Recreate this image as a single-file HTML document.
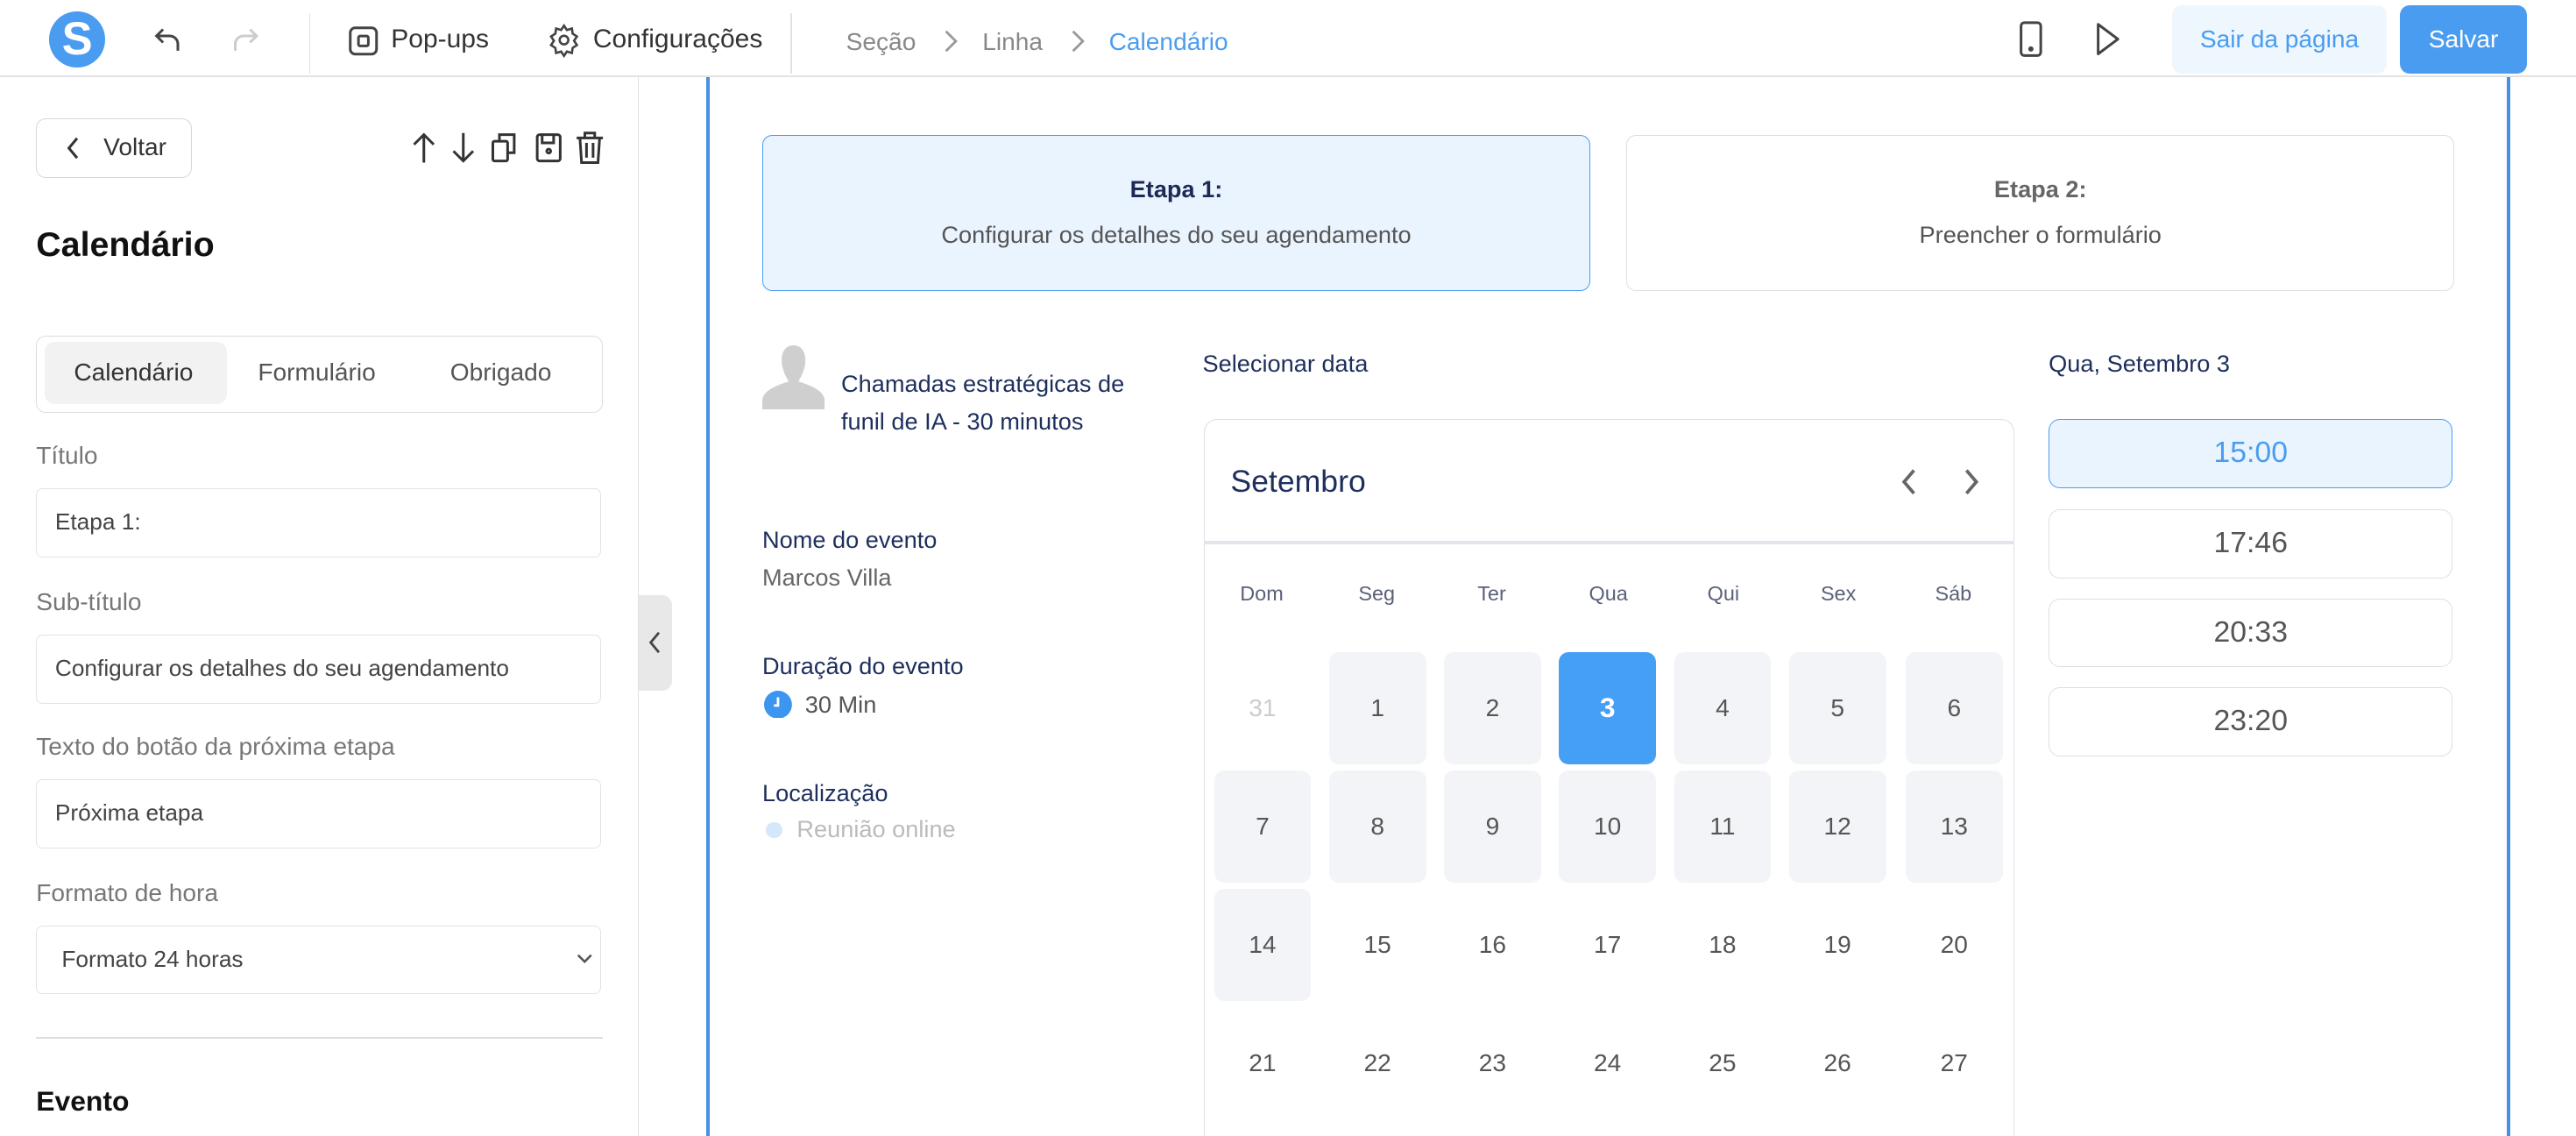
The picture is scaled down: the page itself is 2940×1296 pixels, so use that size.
<!DOCTYPE html>
<html><head><meta charset="utf-8"><style>
*{box-sizing:border-box;margin:0;padding:0}
html,body{width:2940px;height:1296px;overflow:hidden;background:#fff}
#w{zoom:1.875;width:1568px;height:691.2px;position:relative;font-family:"Liberation Sans",sans-serif;color:#333;overflow:hidden}
.a{position:absolute}
.t{position:absolute;white-space:nowrap}
.inp{position:absolute;left:22px;width:344px;height:42px;border:1px solid #e3e3e3;border-radius:4px;font-size:14px;color:#444;padding:0 11px;line-height:40px}
.lab{position:absolute;left:22px;font-size:15px;color:#777}
.cell{position:absolute;width:59px;height:68px;border-radius:6px;font-size:15px;color:#555;text-align:center;line-height:68px}
.g{background:#f3f4f7}
.slot{position:absolute;left:1247px;width:246px;height:42px;border:1px solid #dcdee3;border-radius:7px;text-align:center;line-height:40px;font-size:18px;color:#555}
.dn{position:absolute;top:354px;font-size:12.5px;color:#5a6178;width:60px;text-align:center}
</style></head><body><div id="w">
<!-- top bar -->
<div class="a" style="left:0;top:46px;width:1568px;height:1px;background:#e2e2e2"></div>
<div class="a" style="left:30px;top:7px;width:34px;height:34px;border-radius:50%;background:#4a9cf0;color:#fff;font-weight:bold;font-size:28px;text-align:center;line-height:34px">S</div>
<svg class="a" style="left:92px;top:14px" width="20" height="20" viewBox="0 0 20 20" fill="none" stroke="#444" stroke-width="1.6"><path d="M7 4L3 8l4 4M3 8h8a5 5 0 0 1 5 5v4"/></svg>
<svg class="a" style="left:139px;top:14px" width="20" height="20" viewBox="0 0 20 20" fill="none" stroke="#ccc" stroke-width="1.6"><path d="M13 4l4 4-4 4M17 8H9a5 5 0 0 0-5 5v4"/></svg>
<div class="a" style="left:188px;top:8px;width:1px;height:37px;background:#e2e2e2"></div>
<svg class="a" style="left:211px;top:15px" width="20" height="20" viewBox="0 0 20 20" fill="none" stroke="#444" stroke-width="1.6"><rect x="2" y="2" width="16" height="16" rx="3"/><rect x="7" y="7" width="6" height="6" rx="1"/></svg>
<div class="t" style="left:238px;top:15px;font-size:16px;color:#333">Pop-ups</div>
<svg class="a" style="left:333px;top:14px" width="21" height="21" viewBox="0 0 24 24" fill="none" stroke="#444" stroke-width="1.6"><circle cx="12" cy="12" r="3"/><path d="M12 2l2 3 3.5-1 .5 3.5 3 2-2 3 2 3-3 2-.5 3.5-3.5-1-2 3-2-3-3.5 1-.5-3.5-3-2 2-3-2-3 3-2 .5-3.5 3.5 1z"/></svg>
<div class="t" style="left:361px;top:15px;font-size:16px;color:#333">Configurações</div>
<div class="a" style="left:481px;top:8px;width:1px;height:37px;background:#e2e2e2"></div>
<div class="t" style="left:515px;top:17px;font-size:15px;color:#888">Seção</div>
<svg class="a" style="left:573px;top:17px" width="12" height="16" viewBox="0 0 12 16" fill="none" stroke="#999" stroke-width="1.5"><path d="M3 2l6 6-6 6"/></svg>
<div class="t" style="left:598px;top:17px;font-size:15px;color:#888">Linha</div>
<svg class="a" style="left:650px;top:17px" width="12" height="16" viewBox="0 0 12 16" fill="none" stroke="#999" stroke-width="1.5"><path d="M3 2l6 6-6 6"/></svg>
<div class="t" style="left:675px;top:17px;font-size:15px;color:#4a9cf0">Calendário</div>
<svg class="a" style="left:1227px;top:13px" width="18" height="22" viewBox="0 0 18 22" fill="none" stroke="#444" stroke-width="1.6"><rect x="3" y="1" width="12" height="20" rx="2"/><circle cx="9" cy="17" r=".8" fill="#444"/></svg>
<svg class="a" style="left:1274px;top:13px" width="18" height="22" viewBox="0 0 18 22" fill="none" stroke="#444" stroke-width="1.6"><path d="M3 2l12 9-12 9z" stroke-linejoin="round"/></svg>
<div class="a" style="left:1322px;top:3px;width:131px;height:42px;background:#eef6fe;border-radius:6px;color:#4a9cf0;font-size:15px;text-align:center;line-height:42px">Sair da página</div>
<div class="a" style="left:1461px;top:3px;width:77px;height:42px;background:#4a9cf0;border-radius:6px;color:#fff;font-size:15px;text-align:center;line-height:42px">Salvar</div>
<!-- left panel -->
<div class="a" style="left:388px;top:47px;width:1px;height:650px;background:#e2e2e2"></div>
<div class="a" style="left:389px;top:362px;width:20px;height:58px;background:#e8e8e8;border-radius:0 6px 6px 0"></div>
<svg class="a" style="left:393px;top:383px" width="12" height="16" viewBox="0 0 12 16" fill="none" stroke="#444" stroke-width="1.5"><path d="M8 2L3 8l5 6"/></svg>
<div class="a" style="left:22px;top:72px;width:95px;height:36px;border:1px solid #d8d8d8;border-radius:6px"></div>
<svg class="a" style="left:39px;top:82px" width="12" height="16" viewBox="0 0 12 16" fill="none" stroke="#333" stroke-width="1.6"><path d="M8 2L3 8l5 6"/></svg>
<div class="t" style="left:63px;top:81px;font-size:15px;color:#333">Voltar</div>
<svg class="a" style="left:248px;top:79px" width="124" height="22" viewBox="0 0 124 22" fill="none" stroke="#333" stroke-width="1.6"><path d="M10 20V3M4 9l6-6 6 6"/><path d="M34 2v17M28 13l6 6 6-6"/><rect x="52" y="7" width="9" height="12" rx="1"/><path d="M56 7V3h9v11h-4"/><rect x="79" y="3" width="14" height="16" rx="1.5"/><path d="M82 3v5h7V3"/><circle cx="86" cy="13" r="1.2"/><path d="M103 5h16M108 5V2h6v3M105 5l1 15h10l1-15M109 8v9M113 8v9"/></svg>
<div class="t" style="left:22px;top:137px;font-size:21px;font-weight:bold;color:#111">Calendário</div>
<div class="a" style="left:22px;top:204px;width:345px;height:47px;border:1px solid #ddd;border-radius:6px"></div>
<div class="a" style="left:27px;top:208px;width:111px;height:38px;background:#f2f2f2;border-radius:6px"></div>
<div class="t" style="left:45px;top:218px;font-size:15px;color:#333">Calendário</div>
<div class="t" style="left:157px;top:218px;font-size:15px;color:#555">Formulário</div>
<div class="t" style="left:274px;top:218px;font-size:15px;color:#555">Obrigado</div>
<div class="lab" style="top:269px">Título</div>
<div class="inp" style="top:297px">Etapa 1:</div>
<div class="lab" style="top:358px">Sub-título</div>
<div class="inp" style="top:386px">Configurar os detalhes do seu agendamento</div>
<div class="lab" style="top:446px">Texto do botão da próxima etapa</div>
<div class="inp" style="top:474px">Próxima etapa</div>
<div class="lab" style="top:535px">Formato de hora</div>
<div class="inp" style="top:563px;padding-left:15px">Formato 24 horas</div>
<svg class="a" style="left:350px;top:578px" width="12" height="10" viewBox="0 0 12 10" fill="none" stroke="#555" stroke-width="1.4"><path d="M2 3l4 4 4-4"/></svg>
<div class="a" style="left:22px;top:631px;width:345px;height:1px;background:#ddd"></div>
<div class="t" style="left:22px;top:660px;font-size:17px;font-weight:bold;color:#111">Evento</div>
<!-- canvas -->
<div class="a" style="left:430px;top:47px;width:2px;height:650px;background:#4a90e2"></div>
<div class="a" style="left:1526px;top:47px;width:2px;height:650px;background:#4a90e2"></div>
<div class="a" style="left:464px;top:82px;width:504px;height:95px;background:#eaf4fe;border:1px solid #4a9cf0;border-radius:6px;text-align:center">
<div style="margin-top:24px;font-size:14.5px;font-weight:bold;color:#1c2a55">Etapa 1:</div>
<div style="margin-top:11px;font-size:14.5px;color:#555">Configurar os detalhes do seu agendamento</div></div>
<div class="a" style="left:990px;top:82px;width:504px;height:95px;background:#fff;border:1px solid #dcdee3;border-radius:6px;text-align:center">
<div style="margin-top:24px;font-size:14.5px;font-weight:bold;color:#666">Etapa 2:</div>
<div style="margin-top:11px;font-size:14.5px;color:#555">Preencher o formulário</div></div>
<svg class="a" style="left:464px;top:210px" width="38" height="39" viewBox="0 0 38 39"><path fill="#cfcfcf" d="M19 0c6 0 8 6 7 12-1 5-3 8-4 10 6 2 16 5 16 12v5H0v-5c0-7 10-10 16-12-1-2-3-5-4-10-1-6 1-12 7-12z"/></svg>
<div class="t" style="left:512px;top:222px;font-size:14.5px;line-height:23px;color:#1e2f5e">Chamadas estratégicas de<br>funil de IA - 30 minutos</div>
<div class="t" style="left:464px;top:320px;font-size:14.5px;color:#1e2f5e">Nome do evento</div>
<div class="t" style="left:464px;top:343px;font-size:14.5px;color:#666">Marcos Villa</div>
<div class="t" style="left:464px;top:397px;font-size:14.5px;color:#1e2f5e">Duração do evento</div>
<svg class="a" style="left:465px;top:420px" width="17" height="17" viewBox="0 0 17 17"><circle cx="8.5" cy="8.5" r="8.5" fill="#3d95f2"/><path d="M8.5 4v5H6" stroke="#fff" stroke-width="1.5" fill="none"/></svg>
<div class="t" style="left:490px;top:420px;font-size:14.5px;color:#555">30 Min</div>
<div class="t" style="left:464px;top:474px;font-size:14.5px;color:#1e2f5e">Localização</div>
<div class="a" style="left:466px;top:500px;width:10px;height:10px;border-radius:50%;background:#d5e7fb"></div>
<div class="t" style="left:485px;top:496px;font-size:14.5px;color:#bbb">Reunião online</div>
<div class="t" style="left:732px;top:213px;font-size:14.5px;color:#1e2f5e">Selecionar data</div>
<div class="a" style="left:733px;top:255px;width:493px;height:460px;border:1px solid #dcdee3;border-radius:8px"></div>
<div class="a" style="left:733px;top:329px;width:493px;height:2px;background:#e1e4ea"></div>
<div class="t" style="left:749px;top:282px;font-size:19px;color:#1e2f5e">Setembro</div>
<svg class="a" style="left:1152px;top:283px" width="60" height="20" viewBox="0 0 60 20" fill="none" stroke="#666" stroke-width="2"><path d="M13 3l-6 7 6 7M45 3l6 7-6 7"/></svg>
<div class="dn" style="left:738px">Dom</div><div class="dn" style="left:808px">Seg</div><div class="dn" style="left:878px">Ter</div><div class="dn" style="left:949px">Qua</div><div class="dn" style="left:1019px">Qui</div><div class="dn" style="left:1089px">Sex</div><div class="dn" style="left:1159px">Sáb</div>
<div class="cell" style="left:739px;top:397px;color:#ccc">31</div>
<div class="cell g" style="left:809px;top:397px">1</div>
<div class="cell g" style="left:879px;top:397px">2</div>
<div class="cell" style="left:949px;top:397px;background:#459ff5;color:#fff;font-weight:bold;font-size:17px">3</div>
<div class="cell g" style="left:1019px;top:397px">4</div>
<div class="cell g" style="left:1089px;top:397px">5</div>
<div class="cell g" style="left:1160px;top:397px">6</div>
<div class="cell g" style="left:739px;top:469px">7</div>
<div class="cell g" style="left:809px;top:469px">8</div>
<div class="cell g" style="left:879px;top:469px">9</div>
<div class="cell g" style="left:949px;top:469px">10</div>
<div class="cell g" style="left:1019px;top:469px">11</div>
<div class="cell g" style="left:1089px;top:469px">12</div>
<div class="cell g" style="left:1160px;top:469px">13</div>
<div class="cell g" style="left:739px;top:541px">14</div>
<div class="cell" style="left:809px;top:541px">15</div>
<div class="cell" style="left:879px;top:541px">16</div>
<div class="cell" style="left:949px;top:541px">17</div>
<div class="cell" style="left:1019px;top:541px">18</div>
<div class="cell" style="left:1089px;top:541px">19</div>
<div class="cell" style="left:1160px;top:541px">20</div>
<div class="cell" style="left:739px;top:613px">21</div>
<div class="cell" style="left:809px;top:613px">22</div>
<div class="cell" style="left:879px;top:613px">23</div>
<div class="cell" style="left:949px;top:613px">24</div>
<div class="cell" style="left:1019px;top:613px">25</div>
<div class="cell" style="left:1089px;top:613px">26</div>
<div class="cell" style="left:1160px;top:613px">27</div>
<div class="t" style="left:1247px;top:213px;font-size:14.5px;color:#1e2f5e">Qua, Setembro 3</div>
<div class="slot" style="top:255px;background:#eaf4fe;border-color:#4a9cf0;color:#4a9cf0">15:00</div>
<div class="slot" style="top:310px">17:46</div>
<div class="slot" style="top:364px">20:33</div>
<div class="slot" style="top:418px">23:20</div>
</div></body></html>
